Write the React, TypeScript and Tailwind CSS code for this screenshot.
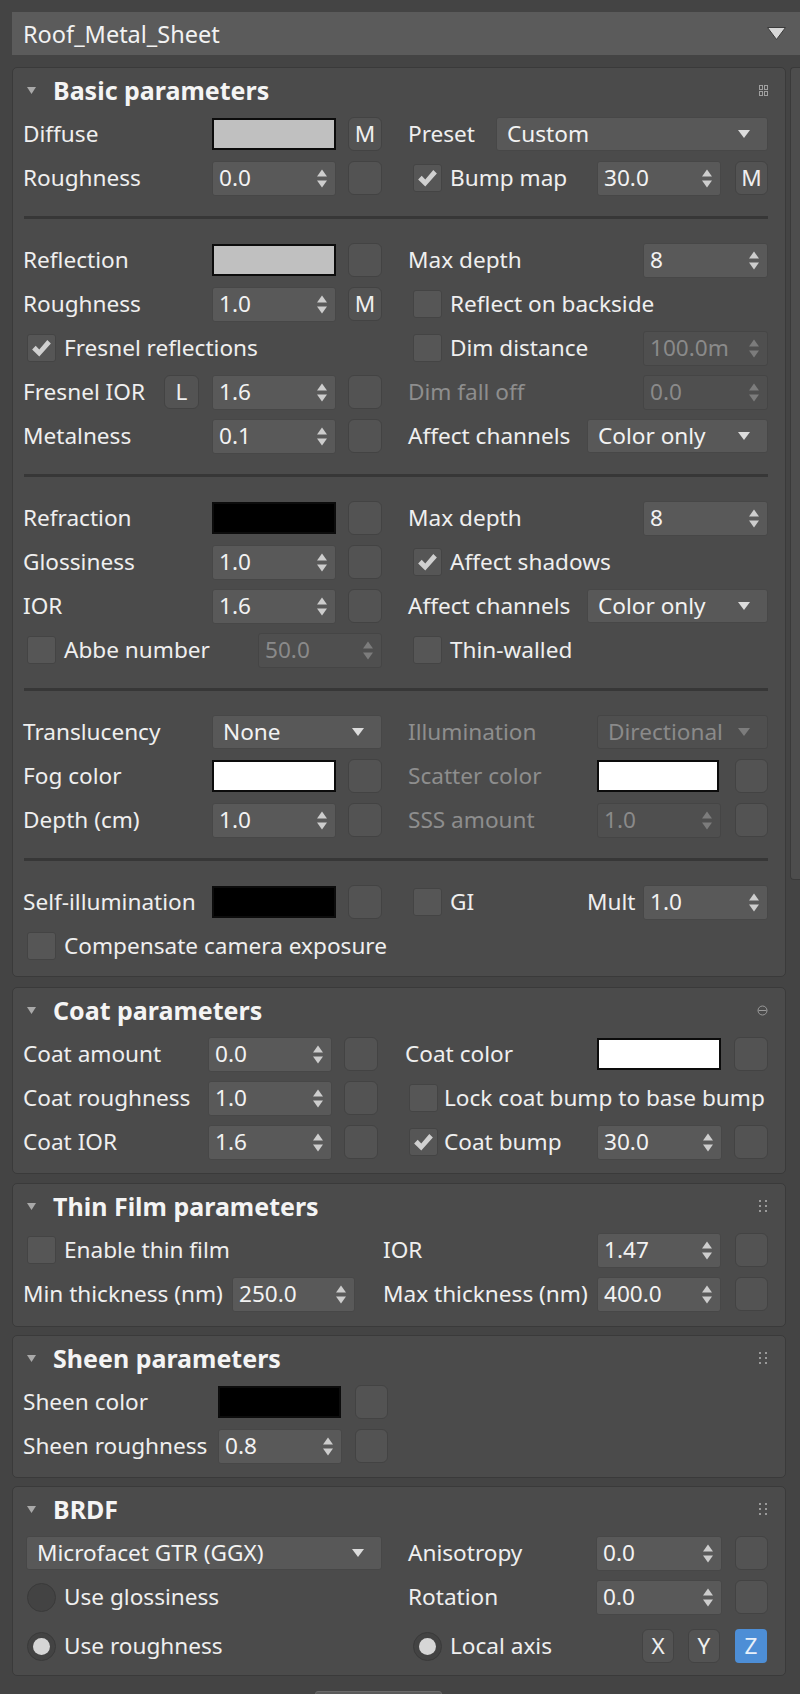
import React from "react";

// shared bits
const txt = "text-[22.6px] leading-[30px] whitespace-nowrap";

function Lbl({ t, w = "", dim, cls = "" }: { t: string; w?: string; dim?: boolean; cls?: string }) {
  return <span className={`${w} ${cls} shrink-0 ${txt} ${dim ? "text-[#8e8e8e]" : "text-[#efefef]"}`}>{t}</span>;
}

function Arrows({ dim }: { dim?: boolean }) {
  const c = dim ? "#7c7c7c" : "#cdcdcd";
  return (
    <svg width="10" height="19" viewBox="0 0 10 19" className="shrink-0">
      <path d="M0 7.5 L5 0.5 L10 7.5 Z" fill={c} />
      <path d="M0 11.5 L5 18.5 L10 11.5 Z" fill={c} />
    </svg>
  );
}

function Spin({ v, w, dim }: { v: string; w: string; dim?: boolean }) {
  return (
    <div
      className={`${w} flex h-[35px] shrink-0 items-center justify-between rounded-[3px] border pl-[6px] pr-[8px] ${
        dim ? "border-[#454545] bg-[#4f4f4f] text-[#8a8a8a]" : "border-[#474747] bg-[#595959] text-[#f2f2f2]"
      }`}
    >
      <span className={txt}>{v}</span>
      <Arrows dim={dim} />
    </div>
  );
}

function Drop({ v, w, dim, cls = "" }: { v: string; w: string; dim?: boolean; cls?: string }) {
  return (
    <div
      className={`${w} ${cls} flex h-[34px] shrink-0 items-center justify-between rounded-[3px] border pl-[10px] pr-[17px] ${
        dim ? "border-[#454545] bg-[#4f4f4f] text-[#8a8a8a]" : "border-[#474747] bg-[#585858] text-[#f2f2f2]"
      }`}
    >
      <span className={txt}>{v}</span>
      <svg width="12" height="8" viewBox="0 0 12 8" className="shrink-0">
        <path d="M0 0 H12 L6 8 Z" fill={dim ? "#7c7c7c" : "#dcdcdc"} />
      </svg>
    </div>
  );
}

function Btn({ t = "", w = "w-[34px]", cls = "" }: { t?: string; w?: string; cls?: string }) {
  return (
    <div
      className={`${w} ${cls} flex h-[34px] shrink-0 items-center justify-center rounded-[6px] border border-[#434343] bg-[#535353] ${txt} text-[#efefef]`}
    >
      {t}
    </div>
  );
}

function Swatch({ c, w }: { c: string; w: string }) {
  return <div className={`${w} ${c} h-[32px] shrink-0 border-2 border-[#0c0c0c]`} />;
}

function Check({ on, cls = "ml-[5px]" }: { on?: boolean; cls?: string }) {
  return (
    <div
      className={`${cls} flex h-[28px] w-[29px] shrink-0 items-center justify-center rounded-[3px] border border-[#444444] bg-[#565656]`}
    >
      {on && (
        <svg width="25" height="25" viewBox="0 0 28 28">
          <path d="M3.5 15 L7.5 11 L11.5 15 L20.5 4.5 L24.5 8.5 L11.5 23 Z" fill="#d0d0d0" />
        </svg>
      )}
    </div>
  );
}

function Radio({ on, cls = "ml-[4px]" }: { on?: boolean; cls?: string }) {
  return (
    <div
      className={`${cls} flex h-[29px] w-[29px] shrink-0 items-center justify-center rounded-full border border-[#3a3a3a] bg-[#434343]`}
    >
      {on && <div className="h-[17px] w-[17px] rounded-full bg-[#d6d6d6]" />}
    </div>
  );
}

function Row({
  l,
  r,
  lw = "w-[359px]",
  rc = "ml-[26px] w-[360px]",
  cls = "",
}: {
  l?: React.ReactNode;
  r?: React.ReactNode;
  lw?: string;
  rc?: string;
  cls?: string;
}) {
  return (
    <div className={`flex h-[44px] items-center ${cls}`}>
      <div className={`flex ${lw} shrink-0 items-center`}>{l}</div>
      {r && <div className={`flex shrink-0 items-center ${rc}`}>{r}</div>}
    </div>
  );
}

function Sep() {
  return <div className="mb-[19px] ml-[1px] mt-[16px] h-[3px] w-[744px] bg-[#373737]" />;
}

function GridIcon() {
  return (
    <svg width="9" height="11" viewBox="0 0 9 11">
      <rect x="0.5" y="0.5" width="3" height="4" fill="none" stroke="#a0a0a0" />
      <rect x="5.5" y="0.5" width="3" height="4" fill="none" stroke="#a0a0a0" />
      <rect x="0.5" y="6.5" width="3" height="4" fill="none" stroke="#a0a0a0" />
      <rect x="5.5" y="6.5" width="3" height="4" fill="none" stroke="#a0a0a0" />
    </svg>
  );
}

function CoatIcon() {
  return (
    <svg width="11" height="11" viewBox="0 0 11 11">
      <circle cx="5.5" cy="5.5" r="4.5" fill="none" stroke="#9a9a9a" />
      <path d="M1.5 5.5 H9.5" stroke="#9a9a9a" />
    </svg>
  );
}

function DotsIcon() {
  return (
    <svg width="10" height="15" viewBox="0 0 10 15">
      {[1, 6, 11].map((y) => (
        <React.Fragment key={y}>
          <rect x="1" y={y} width="2" height="2" fill="#9a9a9a" />
          <rect x="7" y={y} width="2" height="2" fill="#9a9a9a" />
        </React.Fragment>
      ))}
    </svg>
  );
}

function Panel({
  title,
  icon,
  pb,
  cls = "",
  children,
}: {
  title: string;
  icon: React.ReactNode;
  pb: string;
  cls?: string;
  children: React.ReactNode;
}) {
  return (
    <div className={`rounded-[5px] border border-[#3a3a3a] bg-[#4b4b4b] pl-[10px] pr-[17px] ${pb} ${cls}`}>
      <div className="flex h-[44px] items-center">
        <svg width="9" height="7" viewBox="0 0 9 7" className="ml-[4px] shrink-0">
          <path d="M0 0 H9 L4.5 7 Z" fill="#a9a9a9" />
        </svg>
        <span className="ml-[17px] whitespace-nowrap text-[25px] font-bold leading-[30px] text-[#f4f4f4]">{title}</span>
        <div className="ml-auto flex items-center">{icon}</div>
      </div>
      {children}
    </div>
  );
}

function BasicParams() {
  return (
    <Panel title="Basic parameters" icon={<GridIcon />} pb="pb-[8px]">
      <Row
        l={<><Lbl t="Diffuse" w="w-[189px]" /><Swatch c="bg-[#c0c0c0]" w="w-[124px]" /><Btn t="M" cls="ml-[12px]" /></>}
        r={<><Lbl t="Preset" w="w-[88px]" /><Drop v="Custom" w="w-[272px]" /></>}
      />
      <Row
        l={<><Lbl t="Roughness" w="w-[189px]" /><Spin v="0.0" w="w-[124px]" /><Btn cls="ml-[12px]" /></>}
        r={<><Check on /><Lbl t="Bump map" w="w-[147px]" cls="ml-[8px]" /><Spin v="30.0" w="w-[124px]" /><Btn t="M" w="w-[33px]" cls="ml-[14px]" /></>}
      />
      <Sep />
      <Row
        l={<><Lbl t="Reflection" w="w-[189px]" /><Swatch c="bg-[#c0c0c0]" w="w-[124px]" /><Btn cls="ml-[12px]" /></>}
        r={<><Lbl t="Max depth" w="w-[235px]" /><Spin v="8" w="w-[125px]" /></>}
      />
      <Row
        l={<><Lbl t="Roughness" w="w-[189px]" /><Spin v="1.0" w="w-[124px]" /><Btn t="M" cls="ml-[12px]" /></>}
        r={<><Check /><Lbl t="Reflect on backside" cls="ml-[8px]" /></>}
      />
      <Row
        l={<><Check on cls="ml-[4px]" /><Lbl t="Fresnel reflections" cls="ml-[8px]" /></>}
        r={<><Check /><Lbl t="Dim distance" w="w-[193px]" cls="ml-[8px]" /><Spin v="100.0m" w="w-[125px]" dim /></>}
      />
      <Row
        l={<><Lbl t="Fresnel IOR" w="w-[141px]" /><Btn t="L" w="w-[35px]" /><div className="ml-[13px]"><Spin v="1.6" w="w-[124px]" /></div><Btn cls="ml-[12px]" /></>}
        r={<><Lbl t="Dim fall off" w="w-[235px]" dim /><Spin v="0.0" w="w-[125px]" dim /></>}
      />
      <Row
        l={<><Lbl t="Metalness" w="w-[189px]" /><Spin v="0.1" w="w-[124px]" /><Btn cls="ml-[12px]" /></>}
        r={<><Lbl t="Affect channels" w="w-[179px]" /><Drop v="Color only" w="w-[181px]" /></>}
      />
      <Sep />
      <Row
        l={<><Lbl t="Refraction" w="w-[189px]" /><Swatch c="bg-[#000000]" w="w-[124px]" /><Btn cls="ml-[12px]" /></>}
        r={<><Lbl t="Max depth" w="w-[235px]" /><Spin v="8" w="w-[125px]" /></>}
      />
      <Row
        l={<><Lbl t="Glossiness" w="w-[189px]" /><Spin v="1.0" w="w-[124px]" /><Btn cls="ml-[12px]" /></>}
        r={<><Check on /><Lbl t="Affect shadows" cls="ml-[8px]" /></>}
      />
      <Row
        l={<><Lbl t="IOR" w="w-[189px]" /><Spin v="1.6" w="w-[124px]" /><Btn cls="ml-[12px]" /></>}
        r={<><Lbl t="Affect channels" w="w-[179px]" /><Drop v="Color only" w="w-[181px]" /></>}
      />
      <Row
        l={<><Check cls="ml-[4px]" /><Lbl t="Abbe number" w="w-[194px]" cls="ml-[8px]" /><Spin v="50.0" w="w-[124px]" dim /></>}
        r={<><Check /><Lbl t="Thin-walled" cls="ml-[8px]" /></>}
      />
      <Sep />
      <Row
        l={<><Lbl t="Translucency" w="w-[189px]" /><Drop v="None" w="w-[170px]" /></>}
        r={<><Lbl t="Illumination" w="w-[189px]" dim /><Drop v="Directional" w="w-[171px]" dim /></>}
      />
      <Row
        l={<><Lbl t="Fog color" w="w-[189px]" /><Swatch c="bg-[#ffffff]" w="w-[124px]" /><Btn cls="ml-[12px]" /></>}
        r={<><Lbl t="Scatter color" w="w-[189px]" dim /><Swatch c="bg-[#ffffff]" w="w-[122px]" /><Btn w="w-[33px]" cls="ml-[16px]" /></>}
      />
      <Row
        l={<><Lbl t="Depth (cm)" w="w-[189px]" /><Spin v="1.0" w="w-[124px]" /><Btn cls="ml-[12px]" /></>}
        r={<><Lbl t="SSS amount" w="w-[189px]" dim /><Spin v="1.0" w="w-[124px]" dim /><Btn w="w-[33px]" cls="ml-[14px]" /></>}
      />
      <Sep />
      <Row
        l={<><Lbl t="Self-illumination" w="w-[189px]" /><Swatch c="bg-[#000000]" w="w-[124px]" /><Btn cls="ml-[12px]" /></>}
        r={<><Check /><Lbl t="GI" w="w-[137px]" cls="ml-[8px]" /><Lbl t="Mult" w="w-[56px]" /><Spin v="1.0" w="w-[125px]" /></>}
      />
      <Row l={<><Check cls="ml-[4px]" /><Lbl t="Compensate camera exposure" cls="ml-[8px]" /></>} />
    </Panel>
  );
}

function CoatParams() {
  const rc = "ml-[23px] w-[363px]";
  return (
    <Panel title="Coat parameters" icon={<CoatIcon />} pb="pb-[9px]" cls="mt-[10px]">
      <Row
        rc={rc}
        l={<><Lbl t="Coat amount" w="w-[185px]" /><Spin v="0.0" w="w-[124px]" /><Btn cls="ml-[12px]" /></>}
        r={<><Lbl t="Coat color" w="w-[192px]" /><Swatch c="bg-[#ffffff]" w="w-[124px]" /><Btn cls="ml-[13px]" /></>}
      />
      <Row
        rc={rc}
        l={<><Lbl t="Coat roughness" w="w-[185px]" /><Spin v="1.0" w="w-[124px]" /><Btn cls="ml-[12px]" /></>}
        r={<><Check cls="ml-[4px]" /><Lbl t="Lock coat bump to base bump" cls="ml-[6px]" /></>}
      />
      <Row
        rc={rc}
        l={<><Lbl t="Coat IOR" w="w-[185px]" /><Spin v="1.6" w="w-[124px]" /><Btn cls="ml-[12px]" /></>}
        r={<><Check on cls="ml-[4px]" /><Lbl t="Coat bump" w="w-[153px]" cls="ml-[6px]" /><Spin v="30.0" w="w-[125px]" /><Btn cls="ml-[12px]" /></>}
      />
    </Panel>
  );
}

function ThinFilmParams() {
  const rc = "ml-[1px] w-[385px]";
  return (
    <Panel title="Thin Film parameters" icon={<DotsIcon />} pb="pb-[10px]" cls="mt-[9px]">
      <Row
        rc={rc}
        l={<><Check cls="ml-[4px]" /><Lbl t="Enable thin film" cls="ml-[8px]" /></>}
        r={<><Lbl t="IOR" w="w-[214px]" /><Spin v="1.47" w="w-[124px]" /><Btn w="w-[33px]" cls="ml-[14px]" /></>}
      />
      <Row
        rc={rc}
        l={<><Lbl t="Min thickness (nm)" w="w-[209px]" /><Spin v="250.0" w="w-[123px]" /></>}
        r={<><Lbl t="Max thickness (nm)" w="w-[214px]" /><Spin v="400.0" w="w-[124px]" /><Btn w="w-[33px]" cls="ml-[14px]" /></>}
      />
    </Panel>
  );
}

function SheenParams() {
  return (
    <Panel title="Sheen parameters" icon={<DotsIcon />} pb="pb-[9px]" cls="mt-[8px]">
      <Row
        lw="w-[370px]"
        l={<><Lbl t="Sheen color" w="w-[195px]" /><Swatch c="bg-[#000000]" w="w-[123px]" /><Btn w="w-[33px]" cls="ml-[14px]" /></>}
      />
      <Row
        lw="w-[370px]"
        l={<><Lbl t="Sheen roughness" w="w-[195px]" /><Spin v="0.8" w="w-[124px]" /><Btn w="w-[33px]" cls="ml-[13px]" /></>}
      />
    </Panel>
  );
}

function BrdfParams() {
  return (
    <Panel title="BRDF" icon={<DotsIcon />} pb="pb-[7px]" cls="mt-[8px]">
      <Row
        l={<Drop v="Microfacet GTR (GGX)" w="w-[356px]" cls="ml-[3px]" />}
        r={<><Lbl t="Anisotropy" w="w-[188px]" /><Spin v="0.0" w="w-[126px]" /><Btn w="w-[33px]" cls="ml-[13px]" /></>}
      />
      <Row
        l={<><Radio /><Lbl t="Use glossiness" cls="ml-[8px]" /></>}
        r={<><Lbl t="Rotation" w="w-[188px]" /><Spin v="0.0" w="w-[126px]" /><Btn w="w-[33px]" cls="ml-[13px]" /></>}
      />
      <Row
        cls="mt-[5px]"
        l={<><Radio on /><Lbl t="Use roughness" cls="ml-[8px]" /></>}
        r={
          <>
            <Radio on cls="ml-[5px]" />
            <Lbl t="Local axis" w="w-[192px]" cls="ml-[8px]" />
            <Btn t="X" w="w-[32px]" />
            <Btn t="Y" w="w-[32px]" cls="ml-[14px]" />
            <div className="ml-[15px] flex h-[34px] w-[32px] shrink-0 items-center justify-center rounded-[4px] bg-[#4d8ed6] text-[22.6px] leading-[30px] text-[#e8f0fa]">
              Z
            </div>
          </>
        }
      />
    </Panel>
  );
}

export default function App() {
  return (
    <div className="h-[1694px] w-[800px] overflow-hidden bg-[#444444] pt-[12px] font-['Noto_Sans',sans-serif]">
      <div className="ml-[12px] flex h-[43px] w-[788px] items-center justify-between bg-[#5b5b5b] pl-[11px] pr-[14px]">
        <span className="text-[23.5px] leading-[30px] text-[#f2f2f2]">Roof_Metal_Sheet</span>
        <svg width="19" height="13" viewBox="0 0 19 13">
          <path d="M0.5 0.5 H18.5 L9.5 12.5 Z" fill="#d6d6d6" stroke="#3a3a3a" />
        </svg>
      </div>
      <div className="mt-[12px] flex">
        <div className="ml-[12px] w-[774px] shrink-0">
          <BasicParams />
          <CoatParams />
          <ThinFilmParams />
          <SheenParams />
          <BrdfParams />
          <div className="ml-[303px] mt-[15px] h-[20px] w-[127px] rounded-t-[3px] border border-[#6a6a6a] bg-[#5a5a5a]" />
        </div>
        <div className="ml-[4px] h-[813px] w-[10px] rounded-l-[4px] border border-r-0 border-[#3a3a3a] bg-[#4d4d4d]" />
      </div>
    </div>
  );
}
